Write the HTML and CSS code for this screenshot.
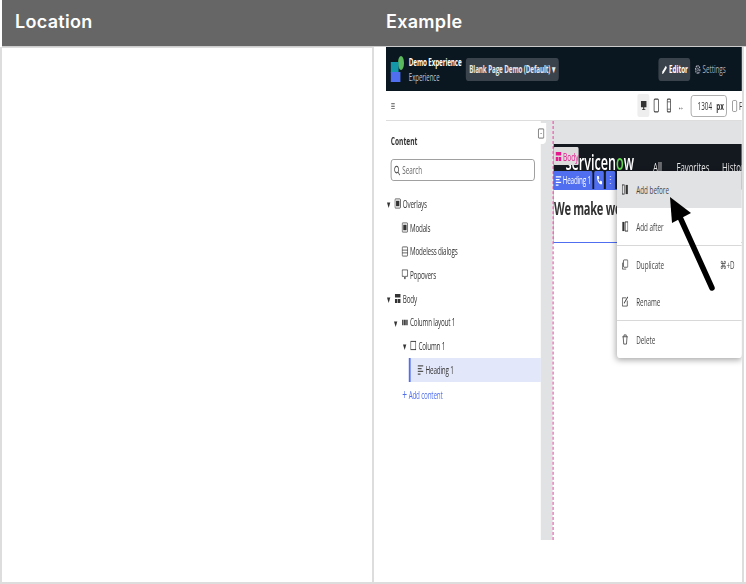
FILE: index.html
```html
<!DOCTYPE html>
<html lang="en">
<head>
    <meta charset="UTF-8">
    <title>Location and example</title>
    <link rel="stylesheet" href="styles.css">
</head>
<body>
    <div class="table">
        <div class="head-row">
            <div class="head-cell">Location</div>
            <div class="head-cell head-example">Example</div>
        </div>
        <div class="body-row">
            <div class="cell-location"></div>
            <div class="cell-example">
                <div class="shot">
                    <div class="shot-inner">
                        <div class="topbar">
                            <div class="logo">
                                <span class="logo-dot"></span>
                                <span class="logo-teal"></span>
                                <span class="logo-blue"></span>
                            </div>
                            <div class="app-title">
                                <div class="app-name">Demo Experience</div>
                                <div class="app-sub">Experience</div>
                            </div>
                            <div class="page-select">Blank Page Demo (Default) ▾</div>
                            <div class="topbar-right">
                                <div class="editor-btn">
                                    <svg class="ico" viewBox="0 0 12 12"><path d="M1 11l1-3 6-6 2 2-6 6z" fill="#fff"/></svg>
                                    Editor
                                </div>
                                <div class="settings">
                                    <svg class="ico" viewBox="0 0 12 12"><circle cx="6" cy="6" r="4" fill="none" stroke="#aab" stroke-width="2" stroke-dasharray="2 1"/><circle cx="6" cy="6" r="1.5" fill="none" stroke="#aab"/></svg>
                                    Settings
                                </div>
                            </div>
                        </div>

                        <div class="toolbar">
                            <div class="menu-lines">≡</div>
                            <div class="toolbar-right">
                                <div class="device device-on">
                                    <svg class="ico" viewBox="0 0 12 12"><path d="M1 1h10v7H1z M5 8h2v2h2v1H3v-1h2z" fill="#333"/></svg>
                                </div>
                                <div class="device">
                                    <svg class="ico ico-tall" viewBox="0 0 12 16"><rect x="2" y="1" width="8" height="14" rx="1.5" fill="none" stroke="#444" stroke-width="1.4"/></svg>
                                </div>
                                <div class="device">
                                    <svg class="ico ico-tall" viewBox="0 0 12 16"><rect x="3" y="1" width="6" height="14" rx="1" fill="none" stroke="#444" stroke-width="1.4"/><path d="M3 4h6M3 12h6" stroke="#444"/></svg>
                                </div>
                                <div class="dash">↔</div>
                                <div class="px-input"><span>1304</span><b>px</b></div>
                                <span class="check"></span>
                                <span class="fit">F</span>
                            </div>
                        </div>

                        <div class="work">
                            <div class="panel">
                                <div class="panel-title">Content</div>
                                <div class="search">
                                    <svg class="ico" viewBox="0 0 12 12"><circle cx="5" cy="5" r="3.6" fill="none" stroke="#444" stroke-width="1.2"/><path d="M8 8l3 3" stroke="#444" stroke-width="1.2"/></svg>
                                    Search
                                </div>
                                <div class="row lvl-0"><span class="caret">▾</span><svg class="ico" viewBox="0 0 12 12"><rect x="1" y="1" width="10" height="10" rx="1" fill="none" stroke="#333"/><rect x="3" y="3" width="6" height="6" fill="#333"/></svg>Overlays</div>
                                <div class="row lvl-1"><svg class="ico" viewBox="0 0 12 12"><rect x="1" y="1" width="10" height="10" rx="1" fill="none" stroke="#333"/><rect x="3" y="3" width="6" height="6" fill="#333"/></svg>Modals</div>
                                <div class="row lvl-1"><svg class="ico" viewBox="0 0 12 12"><rect x="1" y="1" width="10" height="10" rx="1" fill="none" stroke="#333"/><path d="M1 4.5h10M1 7.5h10" stroke="#333"/></svg>Modeless dialogs</div>
                                <div class="row lvl-1"><svg class="ico" viewBox="0 0 12 12"><path d="M1 1h10v7H7l-1 3-1-3H1z" fill="none" stroke="#333"/></svg>Popovers</div>
                                <div class="row lvl-0"><span class="caret">▾</span><svg class="ico" viewBox="0 0 12 12"><path d="M1 1h10v4H1z M1 6.5h4.500v4.500H1z M6.500 6.500H11V11H6.500z" fill="#333"/></svg>Body</div>
                                <div class="row lvl-2"><span class="caret">▾</span><svg class="ico" viewBox="0 0 12 12"><path d="M1 3h2.500v6H1z M4.500 3h3v6h-3z M8.500 3H11v6H8.500z" fill="#333"/></svg>Column layout 1</div>
                                <div class="row lvl-3"><span class="caret">▾</span><svg class="ico" viewBox="0 0 12 12"><rect x="1.500" y="1.500" width="9" height="9" fill="none" stroke="#333"/></svg>Column 1</div>
                                <div class="row row-active"><svg class="ico" viewBox="0 0 12 12"><path d="M1 2h10M1 5h7M1 8h10M1 11h5" stroke="#555" stroke-width="1.200"/></svg>Heading 1</div>
                                <div class="row add-row"><span class="plus">+</span>Add content</div>
                            </div>

                            <div class="gutter">
                                <div class="collapse-btn">
                                    <svg class="ico" viewBox="0 0 12 12"><rect x="1" y="1" width="10" height="10" rx="1" fill="none" stroke="#444"/><path d="M5 6h2" stroke="#444"/></svg>
                                </div>
                            </div>

                            <div class="canvas">
                                <div class="site-bar">
                                    <span class="site-logo">servicen<i>o</i>w</span>
                                    <span class="site-link link-all">All</span>
                                    <span class="site-link link-fav">Favorites</span>
                                    <span class="site-link link-his">History</span>
                                </div>
                                <div class="selected">We make work, work</div>

                                <div class="body-tag">
                                    <svg class="ico" viewBox="0 0 12 12"><path d="M1 1h10v4H1z M1 6.500h4.500V11H1z M6.500 6.500H11V11H6.500z" fill="#e6168c"/></svg>Body
                                </div>
                                <div class="heading-tools">
                                    <div class="tool tool-name">
                                        <svg class="ico" viewBox="0 0 12 12"><path d="M1 2h10M1 5h7M1 8h10M1 11h5" stroke="#fff" stroke-width="1.200"/></svg>Heading 1
                                    </div>
                                    <div class="tool">
                                        <svg class="ico" viewBox="0 0 12 12"><path d="M2 1h3l1 3-2 1 3 3 1-2 3 1v3C6 11 1 6 2 1z" fill="#fff"/></svg>
                                    </div>
                                    <div class="tool">⋮</div>
                                </div>

                                <div class="ctx-menu">
                                    <div class="ctx-group">
                                        <div class="ctx-item ctx-hover"><svg class="ico" viewBox="0 0 12 12"><rect x="1" y="1" width="4" height="10" fill="none" stroke="#333"/><rect x="7" y="1" width="4" height="10" fill="#333"/></svg>Add before</div>
                                        <div class="ctx-item"><svg class="ico" viewBox="0 0 12 12"><rect x="1" y="1" width="4" height="10" fill="#333"/><rect x="7" y="1" width="4" height="10" fill="none" stroke="#333"/></svg>Add after</div>
                                    </div>
                                    <div class="ctx-group">
                                        <div class="ctx-item"><svg class="ico" viewBox="0 0 12 12"><rect x="3" y="1" width="8" height="8" rx="1" fill="none" stroke="#333"/><path d="M1 4v7h7" fill="none" stroke="#333"/></svg>Duplicate<span class="shortcut">⌘+D</span></div>
                                        <div class="ctx-item"><svg class="ico" viewBox="0 0 12 12"><path d="M1 2h7M1 2v9h9V5" fill="none" stroke="#333"/><path d="M4 8l7-7" stroke="#333" stroke-width="1.300"/></svg>Rename</div>
                                    </div>
                                    <div class="ctx-group">
                                        <div class="ctx-item"><svg class="ico" viewBox="0 0 12 12"><path d="M1 3h10M4 3V1h4v2M2.500 3l1 8h5l1-8" fill="none" stroke="#333"/></svg>Delete</div>
                                    </div>
                                </div>
                            </div>
                        </div>
                    </div>
                    <svg class="arrow" width="60" height="110" viewBox="0 0 60 110">
                        <path d="M49 97L16 24" stroke="#000" stroke-width="5.500" stroke-linecap="round"/>
                        <path d="M7 6L28 22 9 32z" fill="#000"/>
                    </svg>
                </div>
            </div>
        </div>
    </div>
</body>
</html>
```

FILE: styles.css
```css
* {
    margin: 0;
    padding: 0;
    box-sizing: border-box;
}

body {
    font-family: 'Open Sans', sans-serif;
    background: white;
    width: 746px;
    height: 584px;
    overflow: hidden;
}

.table {
    height: 584px;
    display: flex;
    flex-direction: column;
    border-bottom: 2px solid #ddd;
}

.head-row {
    height: 47px;
    margin-left: 2px;
    display: flex;
    background: #666;
    border-bottom: 1px solid #ccc;
}

.head-cell {
    width: 372px;
    padding: 11px 0 0 13px;
    color: white;
    font-family: 'Inter', sans-serif;
    font-size: 18px;
    font-weight: 600;
    line-height: 22px;
    letter-spacing: 0.3px;
}

.head-example {
    padding-left: 12px;
}

.body-row {
    flex: 1;
    display: flex;
    border-left: 2px solid #ddd;
}

.cell-location {
    width: 372px;
    border-top: 1px solid #ddd;
    border-right: 2px solid #ddd;
}

.cell-example {
    width: 370px;
    padding-left: 12px;
    border-right: 2px solid #ddd;
}

/* the embedded picture is a wide page squeezed into a narrow column */
.shot {
    position: relative;
    width: 356px;
    height: 493px;
    overflow: hidden;
}

.shot-inner {
    width: 593.333px;
    height: 493px;
    transform: scaleX(0.6);
    transform-origin: 0 0;
    filter: blur(0.45px);
    font-size: 11px;
    color: #333;
}

.ico {
    width: 11px;
    height: 11px;
    flex: none;
}

.ico-tall {
    height: 15px;
}

.topbar {
    height: 44px;
    padding-left: 8px;
    display: flex;
    align-items: center;
    background: #0a1620;
    color: white;
}

.logo {
    position: relative;
    width: 22px;
    height: 26px;
}

.logo-dot {
    position: absolute;
    right: 0;
    top: 0;
    width: 10px;
    height: 14px;
    border-radius: 50%;
    background: #5cb85c;
}

.logo-teal {
    position: absolute;
    left: 0;
    top: 6px;
    width: 13px;
    height: 11px;
    background: #1497a8;
}

.logo-blue {
    position: absolute;
    left: 0;
    bottom: 0;
    width: 16px;
    height: 10px;
    background: #4f6ef0;
}

.app-title {
    margin-left: 8px;
    width: 95px;
    white-space: nowrap;
}

.app-name {
    font-size: 10.500px;
    font-weight: 700;
    line-height: 15px;
    letter-spacing: -0.2px;
}

.app-sub {
    font-size: 10px;
    line-height: 14px;
    color: #c4c8cc;
}

.page-select {
    height: 23px;
    width: 155px;
    line-height: 23px;
    text-align: center;
    border-radius: 4px;
    background: #3a434c;
    font-size: 10.500px;
    font-weight: 700;
    letter-spacing: -0.2px;
    white-space: nowrap;
    color: #e8eaec;
}

.topbar-right {
    margin-left: auto;
    margin-right: 27px;
    display: flex;
    align-items: center;
    gap: 7px;
}

.editor-btn {
    height: 23px;
    width: 53px;
    display: flex;
    align-items: center;
    justify-content: center;
    gap: 2px;
    border-radius: 4px;
    background: #3a434c;
    font-weight: 700;
    font-size: 10.500px;
}

.settings {
    display: flex;
    align-items: center;
    gap: 2px;
    font-size: 10.500px;
    color: #aab0b6;
}

.toolbar {
    height: 30px;
    padding-left: 8px;
    display: flex;
    align-items: center;
    border-bottom: 1px solid #ddd;
    white-space: nowrap;
    overflow: hidden;
}

.menu-lines {
    font-size: 12px;
    color: #555;
}

.toolbar-right {
    margin-left: auto;
    width: 177px;
    margin-right: -3px;
    display: flex;
    align-items: center;
    flex: none;
}

.device {
    width: 20px;
    height: 23px;
    margin-right: 1px;
    display: flex;
    align-items: center;
    justify-content: center;
}

.device-on {
    background: #eee;
    border-radius: 3px;
}

.dash {
    margin-left: 4px;
    width: 22px;
    font-size: 10px;
    color: #444;
}

.px-input {
    width: 60px;
    height: 22px;
    padding: 0 4px 0 10px;
    display: flex;
    align-items: center;
    justify-content: space-between;
    border: 1px solid #999;
    border-radius: 4px;
    font-size: 10.500px;
}

.check {
    margin-left: 9px;
    width: 8px;
    height: 12px;
    flex: none;
    border: 1px solid #888;
    border-radius: 2px;
}

.fit {
    margin-left: 3px;
}

.work {
    height: 419px;
    display: flex;
}

.panel {
    width: 258px;
    padding-top: 12px;
}

.panel-title {
    height: 16px;
    margin-left: 8px;
    line-height: 16px;
    font-size: 11px;
    font-weight: 700;
}

.search {
    height: 22px;
    margin: 10px 10px 11px 8px;
    padding-left: 4px;
    display: flex;
    align-items: center;
    gap: 3px;
    border: 1px solid #888;
    border-radius: 4px;
    color: #666;
    font-size: 10.500px;
}

.row {
    height: 23.700px;
    display: flex;
    align-items: center;
    gap: 3px;
    font-size: 10.500px;
    letter-spacing: -0.3px;
    white-space: nowrap;
}

.caret {
    width: 9px;
    font-size: 11px;
}

.lvl-0 {
    padding-left: 2px;
}

.lvl-1 {
    padding-left: 26px;
}

.lvl-2 {
    padding-left: 14px;
}

.lvl-3 {
    padding-left: 28px;
}

.row-active {
    margin-left: 38px;
    padding-left: 11px;
    background: #e3e7fa;
    border-left: 3px solid #4f6ef0;
}

.add-row {
    padding-left: 27px;
    margin-top: 2px;
    color: #4f6ef0;
}

.plus {
    font-size: 14px;
    line-height: 1;
}

.gutter {
    position: relative;
    width: 20px;
    background: #e1e2e4;
}

.collapse-btn {
    position: absolute;
    left: -8px;
    top: 2px;
    width: 17px;
    height: 21px;
    display: flex;
    align-items: center;
    justify-content: center;
    background: white;
    border-radius: 0 0 5px 5px;
}

.canvas {
    position: relative;
    width: 315px;
    padding-top: 23px;
    background: linear-gradient(#e1e2e4 23px, white 23px);
    border-left: 1px dashed #e6168c;
    overflow: hidden;
}

.site-bar {
    position: relative;
    height: 45px;
    background: #14181f;
    color: #e8e8e8;
}

.site-logo {
    position: absolute;
    left: 20px;
    top: 3px;
    color: white;
    font-size: 21px;
    font-weight: 600;
    line-height: 30px;
}

.site-logo i {
    font-style: normal;
    color: #62d84e;
}

.site-link {
    position: absolute;
    top: 14px;
    font-size: 13px;
    line-height: 18px;
    white-space: nowrap;
}

.link-all {
    left: 166px;
}

.link-fav {
    left: 205px;
}

.link-his {
    left: 281px;
}

.selected {
    height: 54px;
    padding: 6px 0 0 0;
    border: 1px solid #4f6ef0;
    border-right: none;
    font-size: 18.500px;
    font-weight: 700;
    line-height: 24px;
    letter-spacing: -0.5px;
    white-space: nowrap;
    overflow: hidden;
}

.body-tag {
    position: absolute;
    left: 0;
    top: 26px;
    width: 42px;
    height: 18px;
    padding-left: 3px;
    display: flex;
    align-items: center;
    gap: 2px;
    background: #dcdcdc;
    color: #e6168c;
    border-radius: 2px;
}

.heading-tools {
    position: absolute;
    left: 0;
    top: 50px;
    height: 18px;
    display: flex;
    gap: 3px;
}

.tool {
    min-width: 16px;
    height: 18px;
    padding: 0 2px;
    display: flex;
    align-items: center;
    justify-content: center;
    gap: 2px;
    background: #4f6ef0;
    color: white;
    border-radius: 2px 2px 0 0;
    font-size: 10.500px;
    letter-spacing: -0.3px;
    white-space: nowrap;
}

.tool-name {
    width: 65px;
}

.ctx-menu {
    position: absolute;
    left: 106px;
    top: 50px;
    width: 208px;
    background: white;
    border-radius: 0 0 4px 4px;
    box-shadow: 0 2px 8px rgba(0,0,0,0.35);
}

.ctx-group + .ctx-group {
    border-top: 1px solid #d8d8d8;
}

.ctx-item {
    height: 37px;
    padding: 0 12px 0 8px;
    display: flex;
    align-items: center;
    gap: 13px;
    font-size: 10.500px;
    color: #444;
}

.ctx-hover {
    background: #e1e2e4;
}

.shortcut {
    margin-left: auto;
}

.arrow {
    position: absolute;
    left: 277px;
    top: 144px;
}
```
